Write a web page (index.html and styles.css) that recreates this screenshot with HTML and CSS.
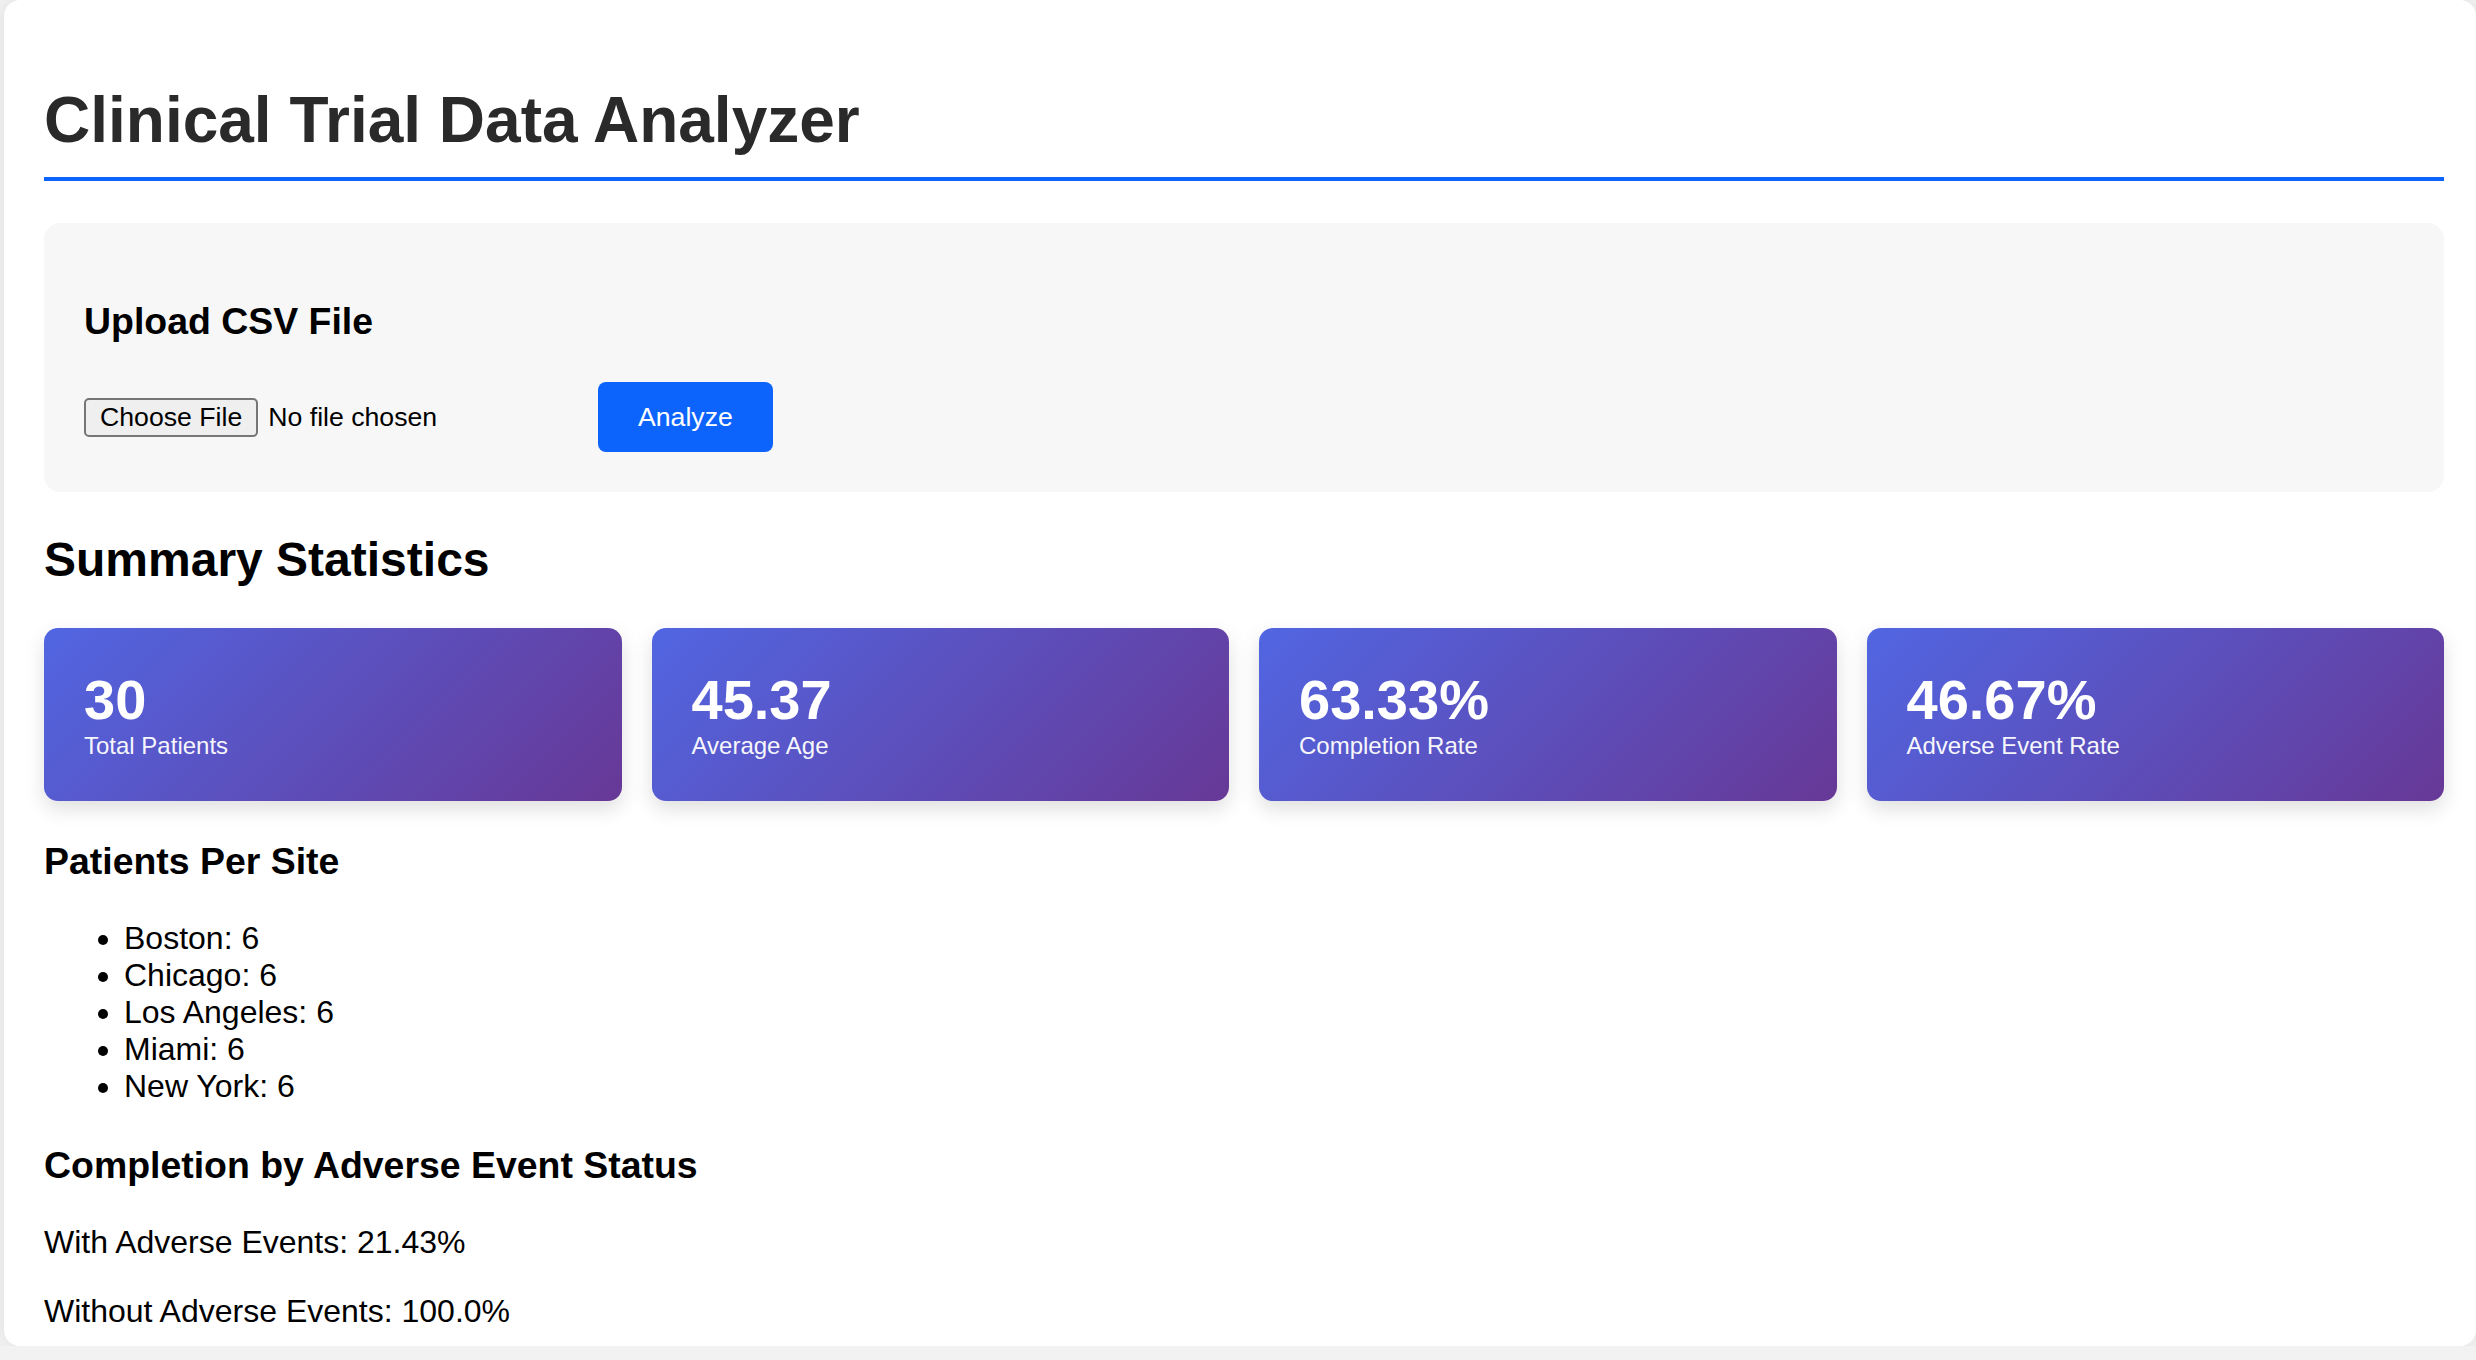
FILE: index.html
```html
<!DOCTYPE html>
<html lang="en">
<head>
<meta charset="utf-8">
<title>Clinical Trial Data Analyzer</title>
<link rel="stylesheet" href="styles.css">
</head>
<body>
<div class="container">
  <h1 class="title">Clinical Trial Data Analyzer</h1>

  <section class="upload">
    <h3 class="upload-title">Upload CSV File</h3>
    <div class="upload-row">
      <input class="file-input" type="file" accept=".csv">
      <button class="analyze-btn" type="button">Analyze</button>
    </div>
  </section>

  <h2 class="section-title">Summary Statistics</h2>
  <div class="stats">
    <div class="stat-card">
      <div class="stat-value">30</div>
      <div class="stat-label">Total Patients</div>
    </div>
    <div class="stat-card">
      <div class="stat-value">45.37</div>
      <div class="stat-label">Average Age</div>
    </div>
    <div class="stat-card">
      <div class="stat-value">63.33%</div>
      <div class="stat-label">Completion Rate</div>
    </div>
    <div class="stat-card">
      <div class="stat-value">46.67%</div>
      <div class="stat-label">Adverse Event Rate</div>
    </div>
  </div>

  <h3 class="sub-title">Patients Per Site</h3>
  <ul class="site-list">
    <li>Boston: 6</li>
    <li>Chicago: 6</li>
    <li>Los Angeles: 6</li>
    <li>Miami: 6</li>
    <li>New York: 6</li>
  </ul>

  <h3 class="sub-title">Completion by Adverse Event Status</h3>
  <p class="text">With Adverse Events: 21.43%</p>
  <p class="text last">Without Adverse Events: 100.0%</p>
</div>
</body>
</html>
```

FILE: styles.css
```css
html, body {
  margin: 0;
  padding: 0;
}

body {
  background: #f2f2f2;
  font-family: "Liberation Sans", Arial, Helvetica, sans-serif;
  font-size: 32px;
  color: #000;
  overflow: hidden;
}

.container {
  margin-left: 4px;
  background: #fff;
  border-radius: 16px;
  padding: 40px 32px 16px 40px;
  box-shadow: 0 0 24px rgba(0, 0, 0, 0.08);
}

.title {
  font-size: 64px;
  font-weight: bold;
  color: #2a2a2a;
  margin: 43px 0 42px 0;
  padding-bottom: 20px;
  border-bottom: 4px solid #0d64fd;
}

.upload {
  background: #f7f7f7;
  border-radius: 16px;
  padding: 40px;
}

.upload-title {
  font-size: 37.44px;
  font-weight: bold;
  margin: 37px 0 39px 0;
}

.upload-row {
  display: flex;
  align-items: center;
  gap: 20px;
}

.file-input {
  width: 494px;
  font-family: "Liberation Sans", Arial, Helvetica, sans-serif;
  font-size: 26.67px;
  color: #000;
}

.file-input::file-selector-button {
  font-family: "Liberation Sans", Arial, Helvetica, sans-serif;
  font-size: 26.67px;
  color: #000;
  background: #efefef;
  border: 2px solid #767676;
  border-radius: 5px;
  padding: 2px 14px;
  margin-right: 10px;
}

.analyze-btn {
  font-family: "Liberation Sans", Arial, Helvetica, sans-serif;
  font-size: 26.67px;
  color: #fff;
  background: #0d64fd;
  border: none;
  border-radius: 8px;
  padding: 19px 40px;
  line-height: 32px;
}

.section-title {
  font-size: 48px;
  font-weight: bold;
  margin: 40px 0 41px 0;
}

.stats {
  display: grid;
  grid-template-columns: repeat(4, 1fr);
  gap: 30px;
}

.stat-card {
  background: linear-gradient(135deg, #5166e2 0%, #673896 100%);
  color: #fff;
  border-radius: 14px;
  padding: 39px 40px 41px 40px;
  box-shadow: 0 8px 20px rgba(0, 0, 0, 0.13);
}

.stat-value {
  font-size: 56px;
  font-weight: bold;
}

.stat-label {
  font-size: 24px;
  opacity: 0.95;
}

.sub-title {
  font-size: 37.44px;
  font-weight: bold;
  margin: 39px 0 37px 0;
}

.site-list {
  margin: 37px 0;
  padding-left: 80px;
}

.text {
  margin: 32px 0;
}

.text.last {
  margin-bottom: 0;
}
```
